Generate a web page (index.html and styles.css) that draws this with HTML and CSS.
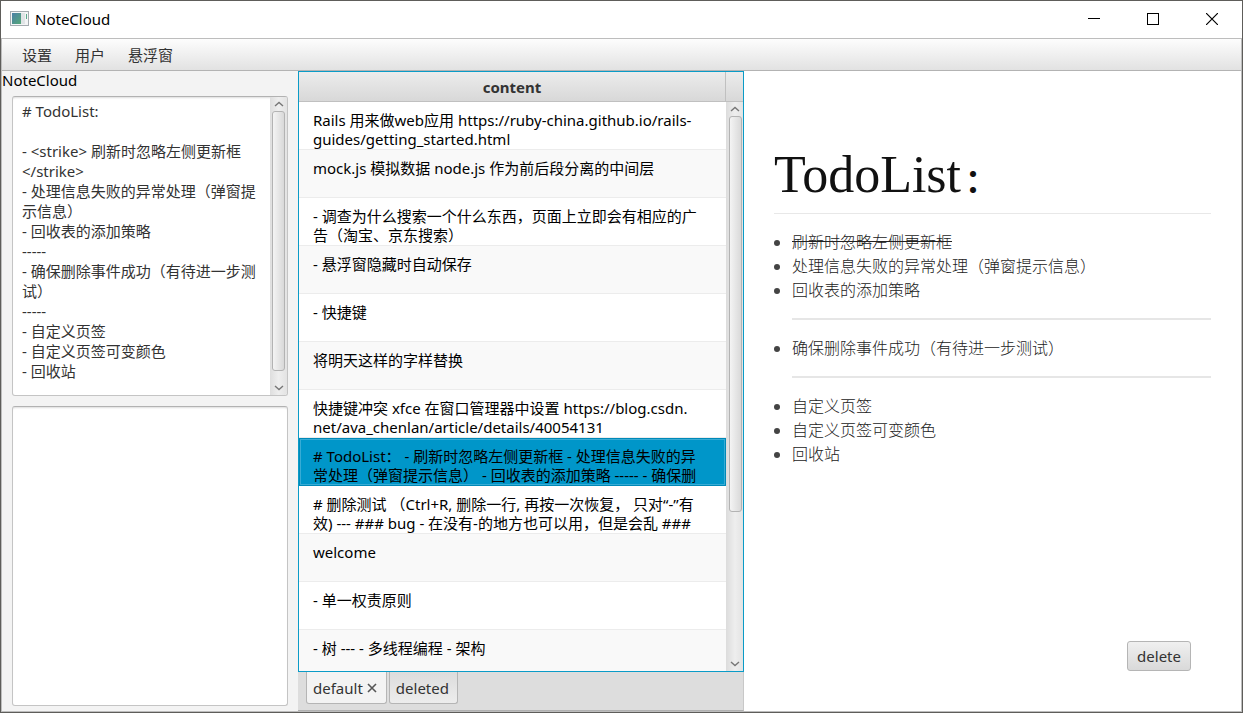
FILE: index.html
```html
<!DOCTYPE html>
<html lang="zh-CN">
<head>
<meta charset="utf-8">
<title>NoteCloud</title>
<link rel="stylesheet" href="styles.css">
</head>
<body>
<div class="window">
  <header class="titlebar">
    <svg class="app-icon" width="20" height="16" viewBox="0 0 20 16">
      <defs><linearGradient id="pane" x1="0" y1="0" x2="1" y2="1"><stop offset="0" stop-color="#4a7fa6"/><stop offset="1" stop-color="#55a878"/></linearGradient></defs>
      <rect x="0.5" y="0.5" width="18" height="14" fill="#f4f5f6" stroke="#a4abb0"/>
      <rect x="2" y="2" width="9" height="11" fill="url(#pane)"/>
      <rect x="11" y="2" width="4" height="11" fill="#e0e4e6"/>
      <rect x="16" y="3" width="1" height="5" fill="#5aa98a"/>
    </svg>
    <span class="title">NoteCloud</span>
    <button class="win-btn" aria-label="Minimize"><svg width="12" height="12"><path d="M0 5.5H12" stroke="#000"/></svg></button>
    <button class="win-btn" aria-label="Maximize"><svg width="12" height="12"><rect x=".5" y=".5" width="11" height="11" fill="none" stroke="#000"/></svg></button>
    <button class="win-btn" aria-label="Close"><svg width="12" height="12"><path d="M0 0L12 12M12 0L0 12" stroke="#000" stroke-width="1.2"/></svg></button>
  </header>
  <div class="client">
    <nav class="menubar">
      <button>设置</button>
      <button>用户</button>
      <button>悬浮窗</button>
    </nav>
    <div class="columns">
      <section class="editor">
        <label class="editor-label" for="note">NoteCloud</label>
        <div class="editor-box">
          <textarea id="note" class="note" spellcheck="false"># TodoList:

- &lt;strike&gt; 刷新时忽略左侧更新框
&lt;/strike&gt;
- 处理信息失败的异常处理（弹窗提
示信息）
- 回收表的添加策略
-----
- 确保删除事件成功（有待进一步测
试）
-----
- 自定义页签
- 自定义页签可变颜色
- 回收站</textarea>
          <div class="scrollbar">
            <svg class="arrow" width="12" height="8"><path d="M2 6L6 2.5L10 6" /></svg>
            <div class="track"><div class="thumb thumb-note"></div></div>
            <svg class="arrow" width="12" height="8"><path d="M2 2L6 5.5L10 2" /></svg>
          </div>
        </div>
        <div class="editor-box">
          <textarea class="note" aria-label="Draft"></textarea>
        </div>
      </section>

      <section class="list">
        <div class="grid">
          <div class="grid-view">
            <table class="notes">
              <thead><tr><th>content</th></tr></thead>
              <tbody>
                <tr><td>Rails 用来做web应用 https://ruby-china.github.io/rails-<br>guides/getting_started.html</td></tr>
                <tr><td>mock.js 模拟数据 node.js 作为前后段分离的中间层</td></tr>
                <tr><td>- 调查为什么搜索一个什么东西，页面上立即会有相应的广<br>告（淘宝、京东搜索）</td></tr>
                <tr><td>- 悬浮窗隐藏时自动保存</td></tr>
                <tr><td>- 快捷键</td></tr>
                <tr><td>将明天这样的字样替换</td></tr>
                <tr><td>快捷键冲突 xfce 在窗口管理器中设置 https://blog.csdn.<br>net/ava_chenlan/article/details/40054131</td></tr>
                <tr class="selected"><td># TodoList： - 刷新时忽略左侧更新框 - 处理信息失败的异<br>常处理（弹窗提示信息） - 回收表的添加策略 ----- - 确保删</td></tr>
                <tr><td># 删除测试 （Ctrl+R, 删除一行, 再按一次恢复， 只对“-”有<br>效) --- ### bug - 在没有-的地方也可以用，但是会乱 ###</td></tr>
                <tr><td>welcome</td></tr>
                <tr><td>- 单一权责原则</td></tr>
                <tr><td>- 树 --- - 多线程编程 - 架构</td></tr>
              </tbody>
            </table>
          </div>
          <div class="grid-side">
            <div class="corner"></div>
            <div class="scrollbar">
              <svg class="arrow" width="12" height="8"><path d="M2 6L6 2.5L10 6" /></svg>
              <div class="track"><div class="thumb thumb-list"></div></div>
              <svg class="arrow" width="12" height="8"><path d="M2 2L6 5.5L10 2" /></svg>
            </div>
          </div>
        </div>
        <div class="tabs">
          <button class="tab active">default<svg width="10" height="10"><path d="M1 1L9 9M9 1L1 9" stroke="#555" stroke-width="1.6"/></svg></button>
          <button class="tab">deleted</button>
        </div>
      </section>

      <main class="preview">
        <article>
          <h1>TodoList<span class="colon">：</span></h1>
          <ul>
            <li><s>刷新时忽略左侧更新框</s></li>
            <li>处理信息失败的异常处理（弹窗提示信息）</li>
            <li>回收表的添加策略</li>
          </ul>
          <hr>
          <ul>
            <li>确保删除事件成功（有待进一步测试）</li>
          </ul>
          <hr>
          <ul>
            <li>自定义页签</li>
            <li>自定义页签可变颜色</li>
            <li>回收站</li>
          </ul>
        </article>
        <button class="delete">delete</button>
      </main>
    </div>
  </div>
</div>
</body>
</html>
```
FILE: styles.css
```css
* { box-sizing: border-box; }

body {
  margin: 0;
  font: 15px/20px "Noto Sans", "Noto Sans CJK SC", sans-serif;
  color: #333;
}

button, textarea {
  font: inherit;
  color: inherit;
  margin: 0;
}

button { white-space: nowrap; }

.window {
  display: flex;
  flex-direction: column;
  height: 100vh;
  background: #fff;
  border: 1px solid #5e5d5a;
}

.titlebar {
  display: flex;
  align-items: center;
  height: 37px;
  padding: 0 1px 2px 9px;
  color: #000;
}

.app-icon { margin-right: 5px; }
.title { flex: 1; }

.win-btn {
  display: grid;
  place-items: center;
  width: 59px;
  height: 35px;
  padding: 0;
  background: none;
  border: 0;
}

.client {
  flex: 1;
  min-height: 0;
  display: flex;
  flex-direction: column;
  border: 1px solid #bdbdbd;
}

.menubar {
  display: flex;
  height: 32px;
  padding-left: 8px;
  background: linear-gradient(#fdfdfd, #e2e2e2);
  border-bottom: 1px solid #b3b3b3;
}

.menubar button {
  padding: 0 11px 0 12px;
  background: none;
  border: 0;
}

.columns {
  flex: 1;
  min-height: 0;
  display: flex;
}

.editor {
  flex: 0 0 296px;
  display: flex;
  flex-direction: column;
  gap: 10px;
  padding: 0 10px 5px;
  background: #f3f3f3;
}

.editor-label {
  margin: 0 0 -3px -10px;
  line-height: 18px;
  color: #000;
}

.editor-box {
  flex: 1;
  min-height: 0;
  display: flex;
  overflow: hidden;
  background: #fff;
  border: 1px solid #c4c4c4;
  border-top-color: #b2b2b2;
  border-radius: 3px;
  box-shadow: inset 0 2px 2px -1px #ddd;
}

.note {
  flex: 1;
  min-width: 0;
  padding: 4px 0 4px 9px;
  background: none;
  border: 0;
  outline: 0;
  resize: none;
  overflow: hidden;
  white-space: pre;
}

.scrollbar {
  flex: 0 0 17px;
  display: flex;
  flex-direction: column;
  align-items: center;
  padding: 3px 0;
  background: linear-gradient(90deg, #dedede, #eee 50%, #e3e3e3);
}

.arrow {
  flex: none;
  fill: none;
  stroke: #777;
  stroke-width: 1.4;
}

.track {
  flex: 1;
  width: 13px;
  margin: 3px 0 2px;
}

.thumb {
  height: 100%;
  background: linear-gradient(90deg, #f4f4f4, #d9d9d9);
  border: 1px solid #b3b3b3;
  border-radius: 3px;
}

.thumb-note { height: 96%; }
.thumb-list { height: 73%; }

.list {
  flex: 0 0 446px;
  display: flex;
  flex-direction: column;
  background: #ddd;
}

.grid {
  flex: 1;
  min-height: 0;
  display: flex;
  border: 1px solid #0a9bc7;
}

.grid-view {
  flex: 1;
  overflow: hidden;
}

.notes {
  width: 100%;
  border-collapse: separate;
  border-spacing: 0;
}

.notes th, .corner {
  height: 30px;
  padding: 0;
  color: #333;
  background: linear-gradient(#ececec, #d8d8d8);
  border-right: 1px solid #c0c0c0;
  border-bottom: 1px solid #c0c0c0;
}

.notes td {
  height: 48px;
  padding: 9px 0 0 14px;
  line-height: 19px;
  color: #000;
  white-space: nowrap;
  vertical-align: top;
  background: #fff;
  border-bottom: 1px solid #ececec;
}

.notes tr:nth-child(even) td { background: #f9f9f9; }

.notes tr.selected:nth-child(n) td {
  background: #0096c9;
  border: 0;
  box-shadow: inset 0 0 0 1px #0089b8, inset 0 0 0 2px #38acd5;
}

.grid-side {
  flex: 0 0 17px;
  display: flex;
  flex-direction: column;
}

.corner { border-right: 0; }
.grid-side .scrollbar { flex: 1; border-left: 1px solid #ddd; }

.tabs {
  display: flex;
  align-items: flex-start;
  gap: 2px;
  height: 39px;
  padding: 0 8px;
  border-bottom: 1px solid #b0b0b0;
  border-right: 1px solid #c8c8c8;
}

.tab {
  display: flex;
  align-items: center;
  gap: 4px;
  height: 32px;
  padding: 0 8px 0 6px;
  background: linear-gradient(#dcdcdc, #ededed);
  border: 1px solid #b5b5b5;
  border-top: 0;
  border-radius: 0 0 3px 3px;
}

.tab.active {
  padding-right: 9px;
  background: #f3f3f3;
}

.preview {
  flex: 1;
  min-width: 0;
  display: flex;
  flex-direction: column;
  justify-content: space-between;
  padding: 74px 30px 40px;
  background: #fff;
}

.preview h1 {
  margin: 0 0 15px;
  padding-bottom: 8px;
  font: 400 52px/60px "Liberation Serif", "Noto Sans CJK SC", serif;
  color: #111;
  border-bottom: 1px solid #e8e8e8;
}

.colon {
  margin-left: 4px;
  font: 700 32px/32px "Noto Sans CJK SC", sans-serif;
}

.preview ul {
  margin: 0;
  padding: 0;
  list-style: none;
}

.preview li {
  display: flex;
  align-items: center;
  gap: 12px;
  font: 300 16px/24px "Noto Sans CJK SC", sans-serif;
  color: #222;
}

.preview li::before {
  content: "";
  width: 6px;
  height: 6px;
  margin-top: 4px;
  background: #444;
  border-radius: 50%;
}

.preview hr {
  height: 2px;
  margin: 17px 0 15px 18px;
  background: #e6e6e6;
  border: 0;
}

.delete {
  align-self: flex-end;
  height: 30px;
  margin-right: 20px;
  padding: 0 9px;
  background: linear-gradient(#f0f0f0, #d9d9d9);
  border: 1px solid #b5b5b5;
  border-radius: 3px;
}
```
